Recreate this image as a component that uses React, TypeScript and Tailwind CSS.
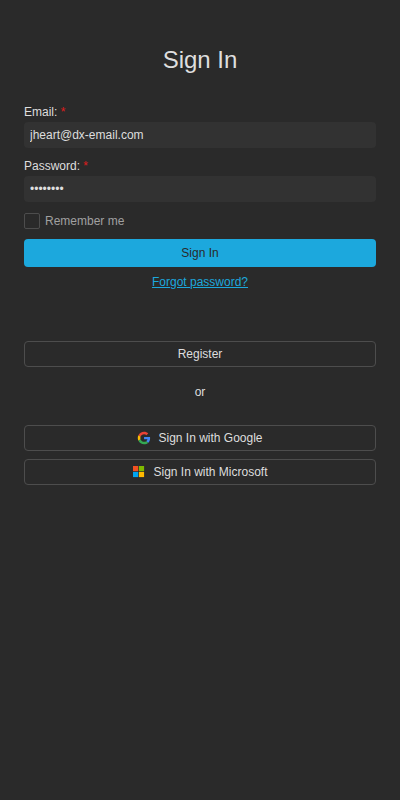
import React from 'react';

function Field({ label, type, value }: { label: string; type: string; value: string }) {
  return (
    <label className="block">
      <span className="block h-5 leading-5">
        {label}: <span className="text-[#e01c1c]">*</span>
      </span>
      <input
        type={type}
        defaultValue={value}
        className="block h-[26px] w-full rounded bg-[#323232] px-1.5 text-[12px] text-[#dedede] outline-none"
      />
    </label>
  );
}

function OutlineButton({ children }: { children: React.ReactNode }) {
  return (
    <button className="flex h-[26px] w-full items-center justify-center gap-[7px] rounded border border-[#4d4d4d]">
      {children}
    </button>
  );
}

function GoogleIcon() {
  return (
    <svg className="h-3.5 w-3.5" viewBox="-2.9 -2.7 53.3 53.3">
      <path fill="#EA4335" d="M24 9.5c3.54 0 6.71 1.22 9.21 3.6l6.85-6.85C35.9 2.38 30.47 0 24 0 14.62 0 6.51 5.38 2.56 13.22l7.98 6.19C12.43 13.72 17.74 9.5 24 9.5z" />
      <path fill="#4285F4" d="M46.98 24.55c0-1.57-.15-3.09-.38-4.55H24v9.02h12.94c-.58 2.96-2.26 5.48-4.78 7.18l7.73 6c4.51-4.18 7.09-10.36 7.09-17.65z" />
      <path fill="#FBBC05" d="M10.53 28.59c-.48-1.45-.76-2.99-.76-4.59s.27-3.14.76-4.59l-7.98-6.19C.92 16.46 0 20.12 0 24s.92 7.54 2.56 10.78l7.97-6.19z" />
      <path fill="#34A853" d="M24 48c6.48 0 11.93-2.13 15.89-5.81l-7.73-6c-2.15 1.45-4.92 2.3-8.16 2.3-6.26 0-11.57-4.22-13.47-9.91l-7.98 6.19C6.51 42.62 14.62 48 24 48z" />
    </svg>
  );
}

function MicrosoftIcon() {
  return (
    <svg className="h-3.5 w-3.5" viewBox="0 0 14 14">
      <path fill="#F25022" d="M1 1h5.2v5.2H1z" />
      <path fill="#7FBA00" d="M6.9 1h5.2v5.2H6.9z" />
      <path fill="#00A4EF" d="M1 6.9h5.2v5.2H1z" />
      <path fill="#FFB900" d="M6.9 6.9h5.2v5.2H6.9z" />
    </svg>
  );
}

export default function App() {
  return (
    <main className="min-h-screen bg-[#2a2a2a] px-6 pt-11 font-['Liberation_Sans',Arial,sans-serif] text-[12px] leading-4 text-[#dedede]">
      <h1 className="text-center text-[24px] leading-8">Sign In</h1>
      <form className="mt-[26px]">
        <Field label="Email" type="email" value="jheart@dx-email.com" />
        <div className="mt-2">
          <Field label="Password" type="password" value="password" />
        </div>
        <label className="mt-[11px] flex h-4 items-center gap-[5px] text-[#a0a0a0]">
          <span className="h-4 w-4 rounded-[2px] border border-[#4d4d4d]" />
          Remember me
        </label>
        <button type="button" className="mt-[10px] flex h-7 w-full items-center justify-center rounded bg-[#1ca8dd] text-[#2a2a2a]">
          Sign In
        </button>
        <div className="mt-[7px] text-center">
          <a href="#" className="text-[#1ca8dd] underline">Forgot password?</a>
        </div>
      </form>
      <div className="mt-[51px]">
        <OutlineButton>Register</OutlineButton>
        <p className="mt-[17px] mb-[25px] text-center">or</p>
        <div className="flex flex-col gap-2">
          <OutlineButton><GoogleIcon />Sign In with Google</OutlineButton>
          <OutlineButton><MicrosoftIcon />Sign In with Microsoft</OutlineButton>
        </div>
      </div>
    </main>
  );
}
